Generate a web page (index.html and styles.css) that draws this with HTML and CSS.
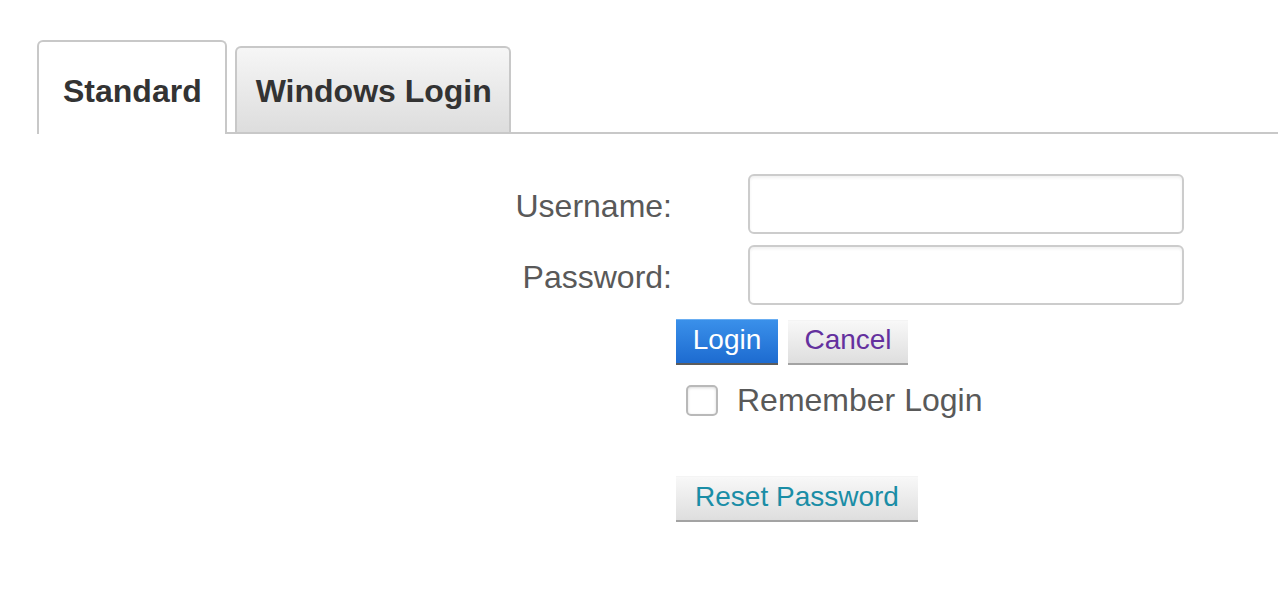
FILE: index.html
```html
<!DOCTYPE html>
<html lang="en">
<head>
<meta charset="utf-8">
<title>Login</title>
<link rel="stylesheet" href="styles.css">
</head>
<body>
<div class="tabs">
  <div class="tab tab-active">Standard</div>
  <div class="tab tab-inactive">Windows Login</div>
</div>
<form class="login">
  <div class="row">
    <label class="label" for="user">Username:</label>
    <input class="field" id="user" type="text">
  </div>
  <div class="row">
    <label class="label" for="pass">Password:</label>
    <input class="field" id="pass" type="password">
  </div>
  <div class="actions">
    <button type="button" class="btn btn-primary">Login</button>
    <button type="button" class="btn btn-cancel">Cancel</button>
  </div>
  <label class="remember">
    <span class="box"></span>
    <span class="remember-text">Remember Login</span>
  </label>
  <div class="reset">
    <button type="button" class="btn btn-reset">Reset Password</button>
  </div>
</form>
</body>
</html>
```
FILE: styles.css
```css
* { box-sizing: border-box; }

html, body {
  margin: 0;
  padding: 0;
  background: #ffffff;
  font-family: "Liberation Sans", Arial, Helvetica, sans-serif;
}

.tabs {
  display: flex;
  align-items: flex-end;
  gap: 8px;
  margin: 40px 0 0 37px;
  border-bottom: 2px solid #c8c8c8;
}

.tab {
  font-size: 32px;
  font-weight: bold;
  line-height: 36px;
  color: #333333;
  border: 2px solid #c8c8c8;
  border-bottom: none;
  border-radius: 6px 6px 0 0;
  white-space: nowrap;
}

.tab-active {
  background: #ffffff;
  padding: 31px 23px 25px 24px;
  margin-bottom: -2px;
}

.tab-inactive {
  background: linear-gradient(#f6f6f6, #dddddd);
  padding: 25px 17px 23px 19px;
}

.login {
  padding-top: 40px;
}

.row {
  display: flex;
  align-items: center;
  margin-bottom: 11px;
}

.label {
  width: 672px;
  text-align: right;
  font-size: 32px;
  line-height: 36px;
  color: #595959;
  margin-right: 76px;
  padding-top: 4px;
}

.field {
  width: 436px;
  height: 60px;
  border: 2px solid #cccccc;
  border-radius: 6px;
  background: #ffffff;
  box-shadow: inset 0 2px 3px rgba(0, 0, 0, 0.06);
  font-size: 28px;
  padding: 0 12px;
  outline: none;
}

.actions {
  display: flex;
  align-items: flex-start;
  gap: 10px;
  margin: 14px 0 0 676px;
}

.btn {
  font-family: "Liberation Sans", Arial, Helvetica, sans-serif;
  font-size: 28px;
  line-height: 31px;
  height: 46px;
  padding: 4px 16px 8px 16px;
  border: none;
  border-top: 1px solid transparent;
  border-bottom: 2px solid #a3a3a3;
  border-radius: 0;
  cursor: pointer;
  white-space: nowrap;
}

.btn-primary {
  width: 102px;
  color: #ffffff;
  background: linear-gradient(#3a90ea, #1d6bd0);
  border-top-color: #6aaef2;
  border-bottom-color: #5c5c5c;
}

.btn-cancel {
  width: 120px;
  margin-top: 1px;
  height: 45px;
  padding-top: 3px;
  color: #64309e;
  background: linear-gradient(#f8f8f8, #dedede);
  border-top-color: #f4f4f4;
}

.btn-reset {
  width: 242px;
  color: #1a8da6;
  background: linear-gradient(#f8f8f8, #dedede);
  border-top-color: #f4f4f4;
}

.remember {
  display: flex;
  align-items: center;
  margin: 17px 0 0 686px;
  height: 36px;
  width: max-content;
}

.box {
  width: 32px;
  height: 31px;
  border: 2px solid #b9b9b9;
  border-radius: 5px;
  background: #ffffff;
  box-shadow: inset 0 1px 3px rgba(0, 0, 0, 0.15);
  margin-right: 19px;
}

.remember-text {
  font-size: 32px;
  line-height: 36px;
  color: #595959;
}

.reset {
  margin: 58px 0 0 676px;
}
```
